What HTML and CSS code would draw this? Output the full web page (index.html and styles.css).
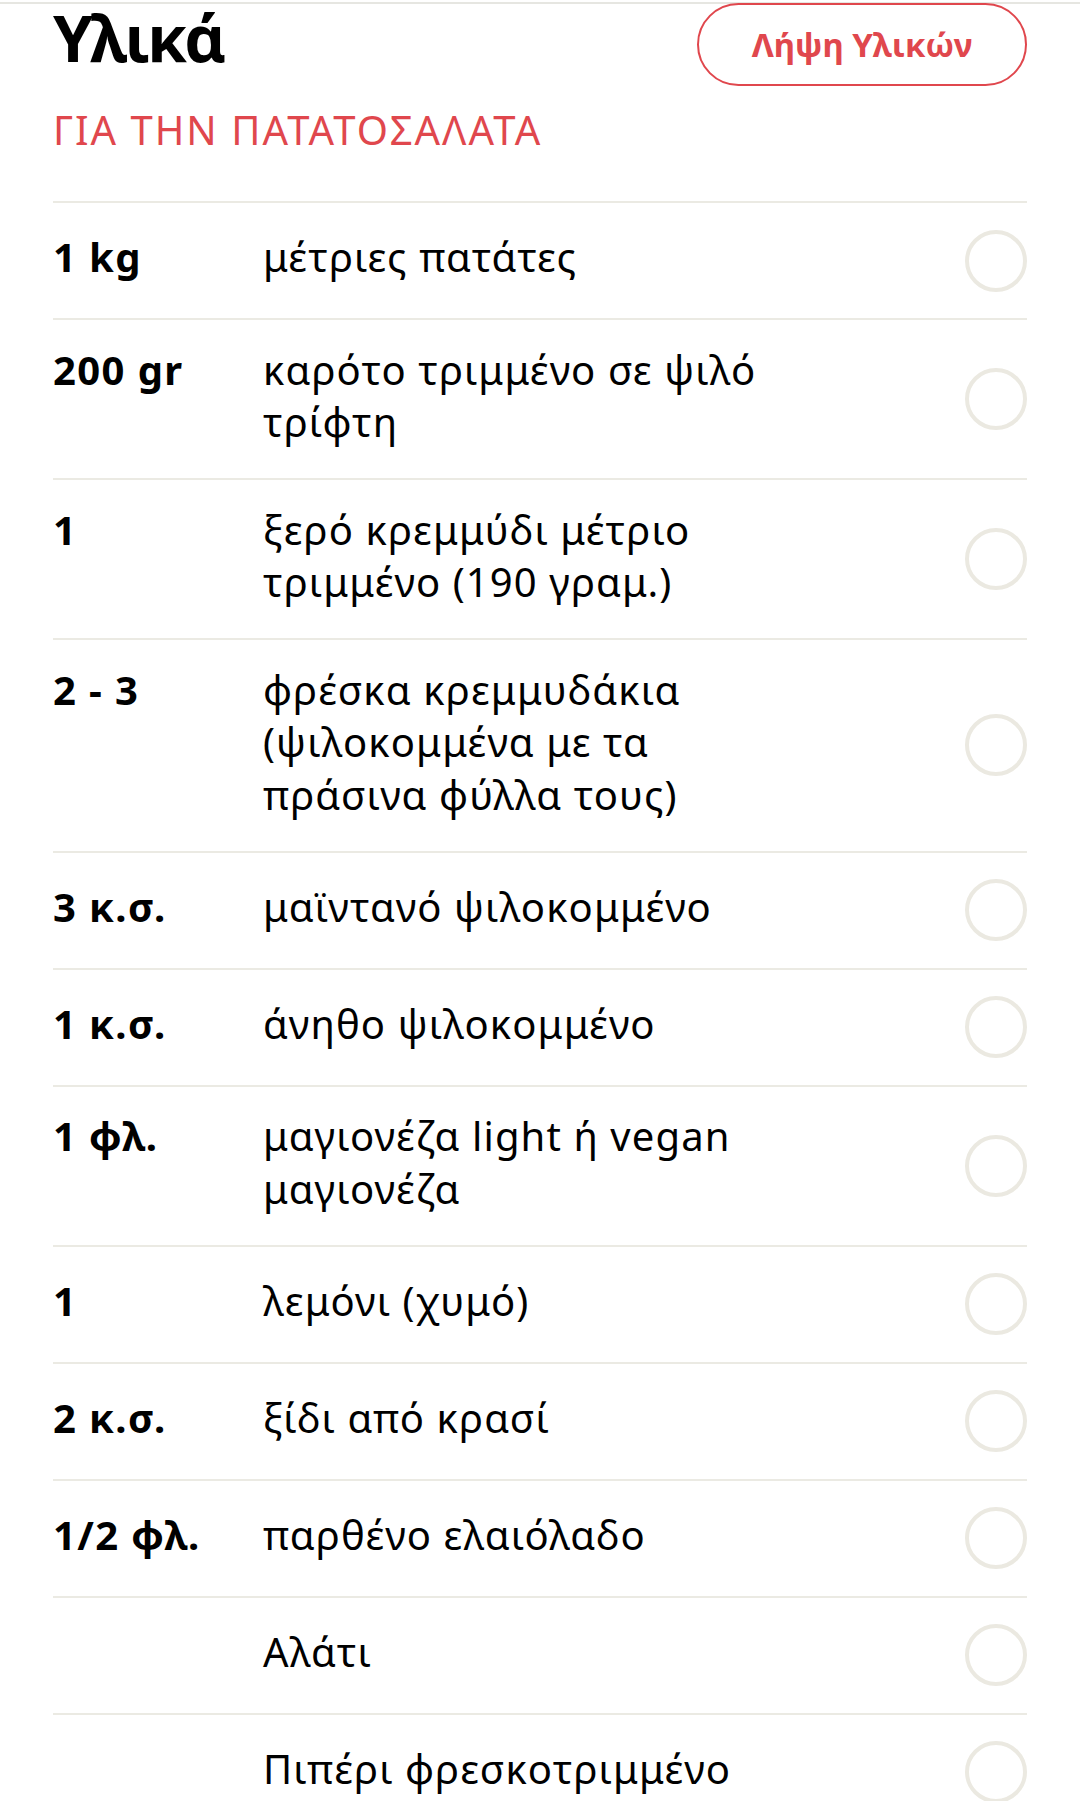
FILE: index.html
```html
<!DOCTYPE html>
<html lang="el">
<head>
<meta charset="utf-8">
<title>Υλικά</title>
<link rel="stylesheet" href="styles.css">
</head>
<body>
<section class="ingredients">
  <header class="head">
    <h1 class="title">Υλικά</h1>
    <button class="get-btn" type="button">Λήψη Υλικών</button>
  </header>
  <h2 class="group">ΓΙΑ ΤΗΝ ΠΑΤΑΤΟΣΑΛΑΤΑ</h2>
  <ul class="list">
    <li class="row"><div class="info"><span class="qty">1 kg</span><span class="name">μέτριες πατάτες</span></div><span class="check"></span></li>
    <li class="row"><div class="info"><span class="qty">200 gr</span><span class="name">καρότο τριμμένο σε ψιλό τρίφτη</span></div><span class="check"></span></li>
    <li class="row"><div class="info"><span class="qty">1</span><span class="name">ξερό κρεμμύδι μέτριο τριμμένο (190 γραμ.)</span></div><span class="check"></span></li>
    <li class="row"><div class="info"><span class="qty">2 - 3</span><span class="name">φρέσκα κρεμμυδάκια (ψιλοκομμένα με τα πράσινα φύλλα τους)</span></div><span class="check"></span></li>
    <li class="row"><div class="info"><span class="qty">3 κ.σ.</span><span class="name">μαϊντανό ψιλοκομμένο</span></div><span class="check"></span></li>
    <li class="row"><div class="info"><span class="qty">1 κ.σ.</span><span class="name">άνηθο ψιλοκομμένο</span></div><span class="check"></span></li>
    <li class="row"><div class="info"><span class="qty">1 φλ.</span><span class="name">μαγιονέζα light ή vegan μαγιονέζα</span></div><span class="check"></span></li>
    <li class="row"><div class="info"><span class="qty">1</span><span class="name">λεμόνι (χυμό)</span></div><span class="check"></span></li>
    <li class="row"><div class="info"><span class="qty">2 κ.σ.</span><span class="name">ξίδι από κρασί</span></div><span class="check"></span></li>
    <li class="row"><div class="info"><span class="qty">1/2 φλ.</span><span class="name">παρθένο ελαιόλαδο</span></div><span class="check"></span></li>
    <li class="row"><div class="info"><span class="qty"></span><span class="name">Αλάτι</span></div><span class="check"></span></li>
    <li class="row"><div class="info"><span class="qty"></span><span class="name">Πιπέρι φρεσκοτριμμένο</span></div><span class="check"></span></li>
  </ul>
</section>
</body>
</html>
```
FILE: styles.css
```css
html, body {
  margin: 0;
  padding: 0;
  background: #ffffff;
}

body {
  font-family: "Noto Sans", "Open Sans", sans-serif;
  color: #000000;
  padding-top: 2px;
}

.ingredients {
  border-top: 2px solid #e6e6e1;
  padding: 0 53px;
}

.head {
  display: flex;
  justify-content: space-between;
  align-items: flex-start;
}

.title {
  margin: 0;
  font-size: 64px;
  line-height: 70px;
  font-weight: 700;
  letter-spacing: -2.7px;
  margin-top: -1px;
}

.get-btn {
  margin-top: -1px;
  width: 330px;
  height: 83px;
  border: 2px solid #e0474d;
  border-radius: 42px;
  background: #ffffff;
  color: #e0474d;
  font-family: inherit;
  font-size: 33px;
  font-weight: 700;
  padding: 0;
}

.group {
  margin: 20px 0 47px;
  font-size: 40px;
  line-height: 48px;
  font-weight: 400;
  letter-spacing: 2px;
  color: #e0474d;
}

.list {
  list-style: none;
  margin: 0;
  padding: 0;
}

.row {
  display: flex;
  align-items: center;
  justify-content: space-between;
  border-top: 2px solid #ebeae3;
  padding: 26.5px 0;
}

.info {
  display: flex;
  align-items: flex-start;
  font-size: 40px;
  line-height: 52.5px;
  letter-spacing: 1.1px;
  margin: -3px 0 3px;
}

.qty {
  width: 210px;
  flex-shrink: 0;
  font-weight: 700;
  letter-spacing: 1.4px;
}

.name {
  width: 525px;
  font-weight: 400;
}

.check {
  width: 62px;
  height: 62px;
  box-sizing: border-box;
  border: 4px solid #ebe9e1;
  border-radius: 50%;
  flex-shrink: 0;
}
```
